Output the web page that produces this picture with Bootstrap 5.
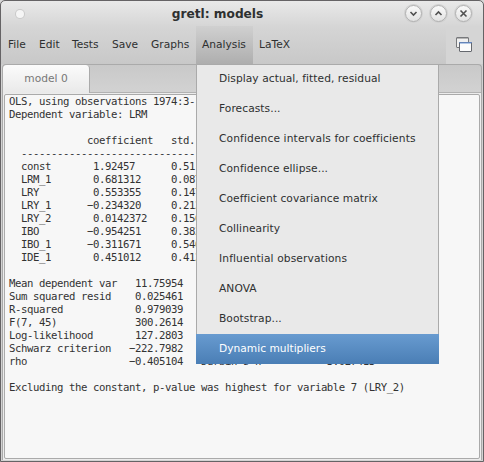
<!DOCTYPE html>
<html lang="en">
<head>
<meta charset="utf-8">
<title>gretl: models</title>
<meta name="viewport" content="width=device-width, initial-scale=1">
<link href="https://cdn.jsdelivr.net/npm/bootstrap@5.3.0/dist/css/bootstrap.min.css" rel="stylesheet">
<style>
body { font-family: "DejaVu Sans", sans-serif; font-size: 10.67px; line-height: 16px; color: #2e3030; background: #d6d6d6; }
.win { width: 484px; height: 462px; border: 1px solid #656365; border-radius: 5px 5px 0 0; background: linear-gradient(#e9e9e9 0, #d5d5d5 26px, #c8c8c8 63px, #d2d2d2 64px); }
.titlebar { height: 25px; }
.title { font-size: 12.2px; padding-right: 72px; }
.dot { width: 8px; height: 8px; margin-left: 15px; background: #f5f5f5; box-shadow: 0 0 0 1px #cacaca; }
.wbtns { right: 11px; gap: 8px; }
.wbtn { width: 17px; height: 17px; padding: 0; border: 1px solid #b0b0b0; background: linear-gradient(#fafafa, #e2e2e2); box-shadow: 0 0 0 1px #d0d0d0; }
.menus { height: 38px; }
.menus .nav-link { height: 38px; padding: 11px 0 0 6px; color: #2e3030; white-space: nowrap; }
.menus .nav-link:first-child { padding-left: 7px; }
.menus .nav-link.active { background: linear-gradient(#d0d0d0, #aeaeae); }
.tool { width: 37px; height: 38px; background: #d5d5d5; padding: 10px 0 0 10px; }
.book { margin: 0 1px; height: 396px; border: 1px solid #aaa; border-bottom: 0; border-radius: 4px 4px 0 0; background: linear-gradient(#c9c9c9, #d2d2d2 27px, #ececec 28px); }
.tabs { height: 28px; border-bottom: 1px solid #b2b2b2; }
.tab { width: 87px; height: 28px; border-right: 1px solid #aaa; border-radius: 4px 4px 0 0; background: linear-gradient(#fbfbfb, #e9e9e9); color: #777; padding-top: 6px; }
.report { height: 365px; margin: 1px 1px 0; padding: 0 0 0 4px; border: 1px solid #aaa; border-radius: 2px; background: #f7f7f7; color: #333; font: 10.67px/13px "DejaVu Sans Mono", monospace; letter-spacing: -.418px; }
.popup { left: 195px; top: 63px; width: 243px; height: 300px; background: #e9e9e9; }
.popup::before { content: ""; position: absolute; inset: 0; border: 1px solid #aaa; pointer-events: none; }
.popup .dropdown-item { position: relative; height: 30px; padding: 7px 0 0 23px; color: #2e3030; font-size: inherit; line-height: 16px; letter-spacing: .06px; }
.popup .dropdown-item.loose { letter-spacing: .12px; }
.popup .dropdown-item.active { color: #fff; background: linear-gradient(#689bd0, #4a7eb5); letter-spacing: 0; }
</style>
<script src="https://cdn.jsdelivr.net/npm/bootstrap@5.3.0/dist/js/bootstrap.bundle.min.js"></script>
</head>
<body class="overflow-hidden">
<main class="win position-relative overflow-hidden">
  <header class="titlebar d-flex align-items-center">
    <span class="dot rounded-circle"></span>
    <span class="title flex-grow-1 text-center fw-bold">gretl: models</span>
    <div class="wbtns position-absolute d-flex">
      <button class="wbtn rounded-circle d-flex" aria-label="Minimize"><svg width="15" height="15" fill="none" stroke="#505050" stroke-width="1.6"><path d="M4.5 6 7.5 9l3-3"/></svg></button>
      <button class="wbtn rounded-circle d-flex" aria-label="Maximize"><svg width="15" height="15" fill="none" stroke="#505050" stroke-width="1.6"><path d="m4.5 9 3-3 3 3"/></svg></button>
      <button class="wbtn rounded-circle d-flex" aria-label="Close"><svg width="15" height="15" fill="none" stroke="#505050" stroke-width="1.6"><path d="m4.5 4.5 6 6m0-6-6 6"/></svg></button>
    </div>
  </header>
  <div class="menus d-flex justify-content-between">
    <nav class="nav flex-nowrap">
      <a class="nav-link" style="width:32px">File</a>
      <a class="nav-link" style="width:33px">Edit</a>
      <a class="nav-link" style="width:40px">Tests</a>
      <a class="nav-link" style="width:39px">Save</a>
      <a class="nav-link" style="width:51px">Graphs</a>
      <a class="nav-link active" style="width:57px">Analysis</a>
      <a class="nav-link">LaTeX</a>
    </nav>
    <div class="tool"><svg class="d-block" width="17" height="17"><rect x=".5" y="1.5" width="12" height="10" rx=".5" fill="#f0f0f0" stroke="#77797c"/><path d="M1 2.5h11" stroke="#b4b4b4"/><rect x="3.5" y="6.5" width="12" height="9" rx=".5" fill="#fbfbfb" stroke="#65686e"/><path d="M3 6.5h13" stroke="#6484b8"/><path d="M4 7.5h11" stroke="#b4c8e6"/></svg></div>
  </div>
  <section class="book">
    <div class="tabs"><div class="tab text-center">model 0</div></div>
<pre class="report overflow-hidden">OLS, using observations 1974:3-
Dependent variable: LRM

             coefficient   std.
  -----------------------------
  const       1.92457      0.51
  LRM_1       0.681312     0.087
  LRY         0.553355     0.147
  LRY_1      −0.234320     0.212
  LRY_2       0.0142372    0.156
  IBO        −0.954251     0.382
  IBO_1      −0.311671     0.546
  IDE_1       0.451012     0.412

Mean dependent var   11.75954
Sum squared resid    0.025461
R-squared            0.979039
F(7, 45)             300.2614
Log-likelihood       127.2803
Schwarz criterion   −222.7982
rho                 −0.405104   Durbin's h           3.027413

Excluding the constant, p-value was highest for variable 7 (LRY_2)</pre>
  </section>
  <div class="popup position-absolute">
    <a class="dropdown-item">Display actual, fitted, residual</a>
    <a class="dropdown-item">Forecasts...</a>
    <a class="dropdown-item loose">Confidence intervals for coefficients</a>
    <a class="dropdown-item">Confidence ellipse...</a>
    <a class="dropdown-item">Coefficient covariance matrix</a>
    <a class="dropdown-item">Collinearity</a>
    <a class="dropdown-item loose">Influential observations</a>
    <a class="dropdown-item">ANOVA</a>
    <a class="dropdown-item">Bootstrap...</a>
    <a class="dropdown-item active">Dynamic multipliers</a>
  </div>
</main>
</body>
</html>
